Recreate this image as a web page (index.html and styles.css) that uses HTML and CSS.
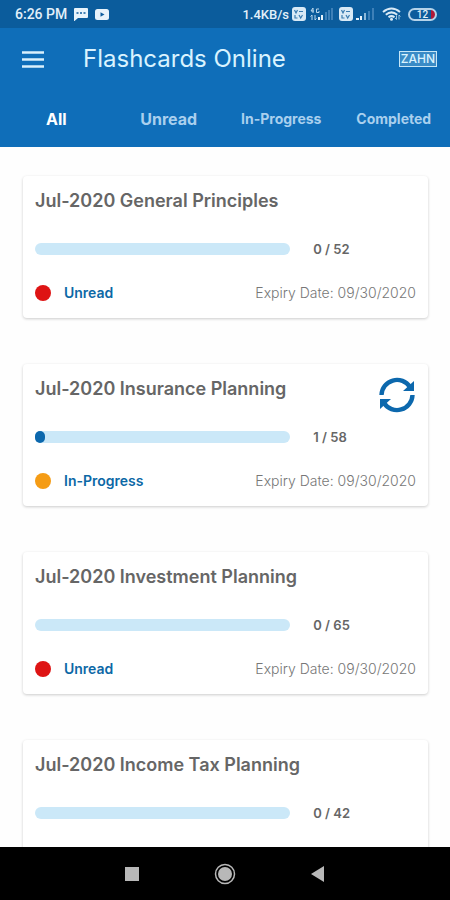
FILE: index.html
```html
<!DOCTYPE html>
<html lang="en">
<head>
    <meta charset="UTF-8">
    <meta name="viewport" content="width=device-width, initial-scale=1.0">
    <title>Flashcards Online</title>
    <link rel="stylesheet" href="styles.css">
</head>
<body>

<div class="status-bar">
    <div class="status-left">
        <span class="status-time">6:26 PM</span>
        <svg width="14" height="13" viewBox="0 0 14 13" aria-hidden="true">
            <path d="M1 0h12a1 1 0 0 1 1 1v8a1 1 0 0 1-1 1H4l-3.500 3H0V1a1 1 0 0 1 1-1z" fill="#e8f3fb"/>
            <path d="M2.500 5h2M6 5h2M9.500 5h2" stroke="#0d5c9e" stroke-width="1.500"/>
        </svg>
        <svg width="14" height="11" viewBox="0 0 14 11" aria-hidden="true">
            <rect width="14" height="11" rx="2.500" fill="#e8f3fb"/>
            <path d="M5.500 3.200v4.600l4-2.300z" fill="#0d5c9e"/>
        </svg>
    </div>
    <div class="status-right">
        <span class="status-speed">1.4KB/s</span>
        <svg width="14" height="14" viewBox="0 0 14 14" aria-hidden="true">
            <rect width="14" height="14" rx="3" fill="#d9eaf6"/>
            <path d="M2.500 3l1.500 3 1.500-3M7 4.500h4M3 8v3h2.500M7 8l1.700 3L10.500 8" fill="none" stroke="#3b7cb0" stroke-width="1.200"/>
        </svg>
        <svg class="signal" width="25" height="14" viewBox="0 0 25 14" aria-hidden="true">
            <path d="M4 1L2 4h3M4 1v5M10 2H7.500v3.500H10V4" fill="none" stroke="#b9d6eb" stroke-width="1"/>
            <path d="M3 8v5M1.500 9.500L3 8M6 8v5l1.500-1.500" fill="none" stroke="#b9d6eb" stroke-width="1"/>
            <path d="M9 10h2v3H9zM12 8h2v5h-2z" fill="#e8f3fb"/>
            <path d="M16 5h2v8h-2zM19 3h2v10h-2zM22 1h2v12h-2z" fill="#3d80b8"/>
        </svg>
        <svg width="14" height="14" viewBox="0 0 14 14" aria-hidden="true">
            <rect width="14" height="14" rx="3" fill="#d9eaf6"/>
            <path d="M2.500 3l1.500 3 1.500-3M7 4.500h4M3 8v3h2.500M7 8l1.700 3L10.500 8" fill="none" stroke="#3b7cb0" stroke-width="1.200"/>
        </svg>
        <svg class="signal" width="18" height="14" viewBox="0 0 18 14" aria-hidden="true">
            <path d="M0 11h3v2H0zM4 9h2v4H4z" fill="#e8f3fb"/>
            <path d="M8 6h2v7H8z" fill="#8db9da"/>
            <path d="M12 4h2v9h-2zM16 1h2v12h-2z" fill="#3d80b8"/>
        </svg>
        <svg class="wifi" width="20" height="14" viewBox="0 0 20 14" aria-hidden="true">
            <path d="M1 5q8.500-7 17 0M3.800 7.700q5.700-4.600 11.400 0M6.500 10.300q3-2.400 6 0" fill="none" stroke="#d9eaf6" stroke-width="2"/>
            <circle cx="9.500" cy="12.300" r="1.500" fill="#d9eaf6"/>
            <path d="M14.500 8.500v4M13 11l1.500 1.500M17 12.500V8l1.500 1.500" fill="none" stroke="#9cc4e0" stroke-width="1"/>
        </svg>
        <span class="battery">12</span>
    </div>
</div>

<header class="app-header">
    <div class="toolbar">
        <button class="menu-button" type="button" aria-label="Menu">
            <svg width="22" height="17" viewBox="0 0 22 17" aria-hidden="true">
                <path d="M0 1.500h22M0 8.500h22M0 15.500h22" stroke="#d9f0fc" stroke-width="2.400"/>
            </svg>
        </button>
        <h1 class="app-title">Flashcards Online</h1>
        <span class="brand">ZAHN</span>
    </div>
    <nav class="tabs">
        <button class="tab active" type="button">All</button>
        <button class="tab tab-large" type="button">Unread</button>
        <button class="tab" type="button">In-Progress</button>
        <button class="tab" type="button">Completed</button>
    </nav>
</header>

<main class="card-list">
    <article class="card">
        <h2 class="card-title">Jul-2020 General Principles</h2>
        <div class="card-progress">
            <div class="track"></div>
            <span class="count">0 / 52</span>
        </div>
        <div class="card-footer">
            <span class="dot"></span>
            <span class="status">Unread</span>
            <span class="expiry">Expiry Date: 09/30/2020</span>
        </div>
    </article>

    <article class="card">
        <h2 class="card-title">Jul-2020 Insurance Planning</h2>
        <button class="reset-button" type="button" aria-label="Reset progress">
            <svg width="36" height="36" viewBox="0 0 36 36" aria-hidden="true">
                <path d="M2.500 18A15.500 15.500 0 0 1 31 10M33.500 18A15.500 15.500 0 0 1 5 26" fill="none" stroke="#0c68ad" stroke-width="4.400"/>
                <path d="M35 4v10H24zM1 32V22h11z" fill="#0c68ad"/>
            </svg>
        </button>
        <div class="card-progress">
            <div class="track"><div class="bar" style="width: 2%"></div></div>
            <span class="count">1 / 58</span>
        </div>
        <div class="card-footer">
            <span class="dot dot-progress"></span>
            <span class="status">In-Progress</span>
            <span class="expiry">Expiry Date: 09/30/2020</span>
        </div>
    </article>

    <article class="card">
        <h2 class="card-title">Jul-2020 Investment Planning</h2>
        <div class="card-progress">
            <div class="track"></div>
            <span class="count">0 / 65</span>
        </div>
        <div class="card-footer">
            <span class="dot"></span>
            <span class="status">Unread</span>
            <span class="expiry">Expiry Date: 09/30/2020</span>
        </div>
    </article>

    <article class="card">
        <h2 class="card-title">Jul-2020 Income Tax Planning</h2>
        <div class="card-progress">
            <div class="track"></div>
            <span class="count">0 / 42</span>
        </div>
    </article>
</main>

<nav class="system-nav">
    <button type="button" aria-label="Recent apps">
        <svg width="22" height="22" viewBox="0 0 22 22" aria-hidden="true"><rect x="4" y="4" width="14" height="14" fill="#b8b8b8"/></svg>
    </button>
    <button type="button" aria-label="Home">
        <svg width="22" height="22" viewBox="0 0 22 22" aria-hidden="true">
            <circle cx="11" cy="11" r="9.500" fill="none" stroke="#b8b8b8" stroke-width="1.500"/>
            <circle cx="11" cy="11" r="7" fill="#b8b8b8"/>
        </svg>
    </button>
    <button type="button" aria-label="Back">
        <svg width="22" height="22" viewBox="0 0 22 22" aria-hidden="true"><path d="M17 3v16L4 11z" fill="#b8b8b8"/></svg>
    </button>
</nav>

</body>
</html>
```

FILE: styles.css
```css
* {
    box-sizing: border-box;
}
body {
    margin: 0;
    height: 100vh;
    display: flex;
    flex-direction: column;
    font-family: Inter, "Liberation Sans", sans-serif;
    background-color: #fefefe;
    color: #666;
}
button {
    border: none;
    padding: 0;
    background: none;
    font-family: inherit;
    cursor: pointer;
}
svg {
    display: block;
}

/* Status bar */
.status-bar {
    height: 28px;
    flex-shrink: 0;
    display: flex;
    justify-content: space-between;
    align-items: center;
    padding: 0 13px 0 15px;
    background-color: #0b5c9c;
    color: #e2f0fa;
    font-family: Roboto, "Liberation Sans", sans-serif;
    font-weight: 500;
}
.status-left,
.status-right {
    display: flex;
    align-items: center;
}
.status-left {
    gap: 7px;
}
.status-right {
    gap: 3px;
}
.status-time {
    font-size: 14px;
}
.status-speed {
    font-size: 13px;
}
.signal {
    margin-right: 2px;
}
.wifi {
    margin: 0 3px;
}
.battery {
    width: 29px;
    height: 13px;
    border: 2px solid #b5d3e9;
    border-radius: 7px;
    background: linear-gradient(to right, transparent 21px, #b01838 21px);
    font-size: 10px;
    line-height: 9px;
    text-align: center;
}

/* Header */
.app-header {
    flex-shrink: 0;
    background-color: #0f6eb9;
}
.toolbar {
    height: 62px;
    display: flex;
    align-items: center;
    padding: 0 13px 0 22px;
}
.app-title {
    flex: 1;
    margin: 0 0 0 39px;
    font-size: 24px;
    line-height: 32px;
    font-weight: 400;
    color: #d9f3ff;
}
.brand {
    padding: 0 1px;
    border: 1px solid #c5e6f7;
    background-color: #3a8bc6;
    font-size: 12px;
    line-height: 14px;
    font-weight: 500;
    color: #d9f3ff;
}
.tabs {
    height: 57px;
    display: grid;
    grid-template-columns: repeat(4, 1fr);
}
.tab {
    font-size: 14px;
    font-weight: 700;
    color: #a9d0ee;
}
.tab-large {
    font-size: 16px;
}
.tab.active {
    font-size: 16px;
    color: #fff;
}

/* Cards */
.card-list {
    flex: 1;
    min-height: 0;
    overflow: hidden;
    display: flex;
    flex-direction: column;
    gap: 46px;
    padding: 29px 22px 0 23px;
}
.card {
    position: relative;
    flex-shrink: 0;
    min-height: 142px;
    padding: 12px 12px 13px;
    border-radius: 4px;
    background-color: #fff;
    box-shadow: 0 1px 3px rgba(0,0,0,0.2);
}
.card-title {
    margin: 0;
    font-size: 18px;
    line-height: 26px;
    font-weight: 600;
}
.card-progress {
    display: flex;
    align-items: center;
    gap: 23px;
    margin-top: 23px;
}
.track {
    width: 67%;
    height: 12px;
    border-radius: 6px;
    background-color: #cbe8f8;
}
.bar {
    min-width: 10px;
    height: 12px;
    border-radius: 5px;
    background-color: #0c68ad;
}
.count {
    font-size: 13px;
    line-height: 24px;
    font-weight: 600;
}
.card-footer {
    display: flex;
    align-items: center;
    margin-top: 20px;
    font-size: 14px;
    line-height: 24px;
}
.dot {
    width: 16px;
    height: 16px;
    margin-right: 13px;
    border-radius: 50%;
    background-color: #de1414;
}
.dot-progress {
    background-color: #f59c15;
}
.status {
    font-weight: 600;
    color: #0c68a6;
}
.expiry {
    margin-left: auto;
    font-weight: 300;
    color: #777;
}
.reset-button {
    position: absolute;
    top: 13px;
    right: 13px;
}

/* Android navigation */
.system-nav {
    height: 53px;
    flex-shrink: 0;
    display: flex;
    justify-content: center;
    align-items: center;
    gap: 71px;
    background-color: #000;
}
```
